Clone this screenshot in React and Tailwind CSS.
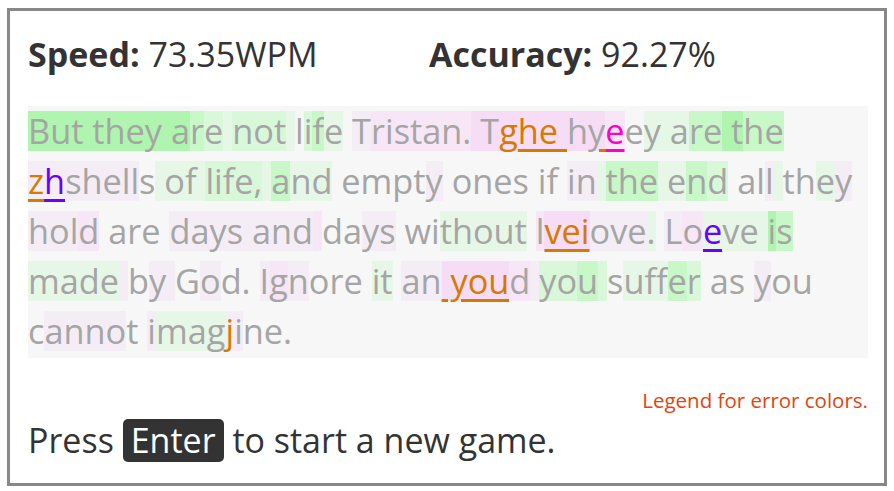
import React from "react";

// background shades used for per-character timing highlights
const bg = {
  A: "bg-[#aff5af]",
  B: "bg-[#c8f7c8]",
  C: "bg-[#d9f7d9]",
  D: "bg-[#e7f7e7]",
  P: "bg-[#f7dcf5]",
  Q: "bg-[#f7e6f6]",
  R: "bg-[#f5edf5]",
  _: "",
};

// error text styles
const err = {
  o: "text-[#d47b00]",
  ou: "text-[#d47b00] underline decoration-[#d47b00] decoration-[3px] underline-offset-[5px]",
  yu: "underline decoration-[#d47b00] decoration-[3px] underline-offset-[5px]",
  mu: "text-[#ff00c8] underline decoration-[#ff00c8] decoration-[3px] underline-offset-[5px]",
  pu: "text-[#6a00ff] underline decoration-[#6a00ff] decoration-[3px] underline-offset-[5px]",
};

const lines = [
  [
    ["But they a", "A"], ["r", "B"], ["e", "C"], [" ", "D"], ["not", "C"], [" ", "D"],
    ["l", "_"], ["i", "C"], ["f", "B"], ["e", "D"], [" ", "_"], ["T", "R"], ["ristan.", "Q"],
    [" T", "P"], ["g", "P", "o"], ["he ", "P", "ou"], ["h", "P"], ["y", "P", "yu"],
    ["e", "Q", "mu"], ["e", "_"], ["y ", "D"], ["a", "D"], ["re", "B"], [" t", "A"], ["he", "B"],
  ],
  [
    ["z", "R", "ou"], ["h", "R", "pu"], ["shell", "R"], ["s", "_"], [" of ", "D"], ["life,", "C"],
    [" ", "D"], ["a", "B"], ["nd", "D"], [" empt", "_"], ["y", "R"], [" ones if ", "_"], ["in", "R"],
    [" ", "D"], ["the", "B"], [" e", "D"], ["n", "B"], ["d", "C"], [" al", "_"], ["l", "R"],
    [" ", "D"], ["th", "_"], ["e", "D"], ["y", "R"],
  ],
  [
    ["hol", "R"], ["d", "Q"], [" are ", "_"], ["days and", "R"], [" ", "Q"], ["da", "_"], ["ys", "R"],
    [" wi", "_"], ["thout", "D"], [" ", "_"], ["l", "Q"], ["vei", "P", "ou"], ["ove", "R"], [".", "D"],
    [" ", "_"], ["L", "R"], ["o", "Q"], ["e", "D", "pu"], ["ve ", "D"], ["i", "A"], ["s", "B"],
  ],
  [
    ["made", "D"], [" ", "R"], ["b", "_"], ["y ", "R"], ["G", "_"], ["o", "R"], ["d. ", "_"],
    ["I", "R"], ["g", "Q"], ["n", "R"], ["ore ", "_"], ["it", "D"], [" ", "_"], ["an", "R"],
    [" you", "P", "ou"], ["d", "Q"], [" ", "R"], ["yo", "C"], ["u", "B"], [" ", "C"], ["s", "_"],
    ["uff", "D"], ["e", "B"], ["r", "C"], [" as ", "_"], ["y", "R"], ["ou", "_"],
  ],
  [
    ["c", "_"], ["anno", "R"], ["t ", "_"], ["i", "R"], ["mag", "D"], ["j", "R", "o"], ["i", "R"],
    ["ne.", "_"],
  ],
];

const Passage = () => {
  return (
    <div className="bg-[#f7f7f7] pb-[2px] text-[34.3px] text-[#a5a5a5]">
      {lines.map((segs, i) => (
        <div key={i} className="flex items-center h-[50px]">
          {segs.map(([text, b, e], j) => (
            <span
              key={j}
              className={`h-[40px] leading-[40px] whitespace-pre ${bg[b]} ${e ? err[e] : ""}`}
            >
              {text}
            </span>
          ))}
        </div>
      ))}
    </div>
  );
};

export default function App() {
  return (
    <div className="pt-[8px] pl-[7px] bg-white font-['Open_Sans',sans-serif]">
      <div className="w-[880px] h-[478px] border-[3px] border-[#888] pt-[18px] pl-[18px] pr-[16px]">
        <div className="flex h-[50px] leading-[50px] text-[34px] text-[#333]">
          <div className="w-[401px]">
            <span className="font-bold">Speed:</span> 73.35WPM
          </div>
          <div>
            <span className="font-bold">Accuracy:</span> 92.27%
          </div>
        </div>

        <div className="mt-[27px]">
          <Passage />
        </div>

        <div className="mt-[30px] h-[24px] leading-[24px] text-[20.5px] text-right text-[#e2440f]">
          Legend for error colors.
        </div>

        <div className="mt-[3px] flex items-center h-[50px] text-[34px] text-[#333] whitespace-pre">
          <span>Press </span>
          <span className="h-[43px] leading-[43px] px-[8px] rounded-[5px] bg-[#333] text-white">
            Enter
          </span>
          <span> to start a new game.</span>
        </div>
      </div>
    </div>
  );
}
